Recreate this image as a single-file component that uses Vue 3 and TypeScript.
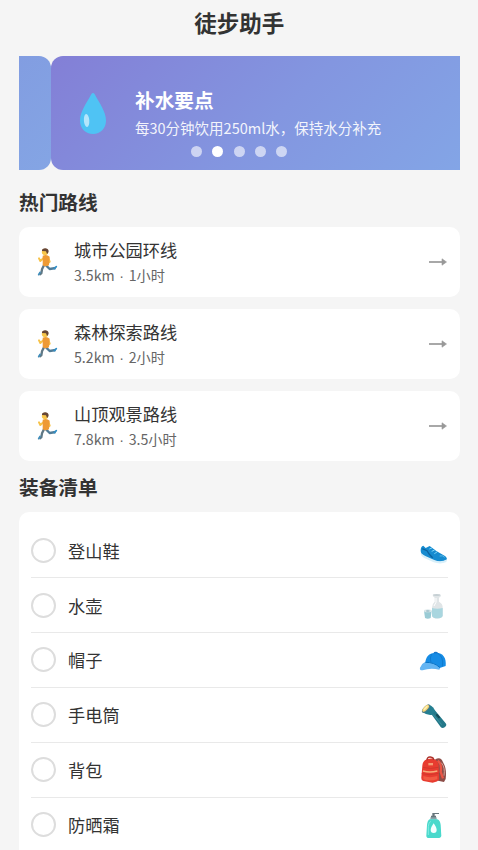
<script setup lang="ts">
import { reactive, ref } from 'vue'

interface Route {
  name: string
  distance: string
  duration: string
}
interface Gear {
  name: string
  icon: string
  checked: boolean
}

const routes: Route[] = [
  { name: '城市公园环线', distance: '3.5km', duration: '1小时' },
  { name: '森林探索路线', distance: '5.2km', duration: '2小时' },
  { name: '山顶观景路线', distance: '7.8km', duration: '3.5小时' },
]

const gear = reactive<Gear[]>([
  { name: '登山鞋', icon: 'shoe', checked: false },
  { name: '水壶', icon: 'bottle', checked: false },
  { name: '帽子', icon: 'cap', checked: false },
  { name: '手电筒', icon: 'torch', checked: false },
  { name: '背包', icon: 'pack', checked: false },
  { name: '防晒霜', icon: 'lotion', checked: false },
])

const activeSlide = ref(1)
</script>

<template>
  <main class="page">
    <h1 class="title">徒步助手</h1>

    <section class="banner">
      <div class="slide previous"></div>
      <div class="slide current">
        <svg class="drop" viewBox="0 0 28 44">
          <path d="M14 1C15 1 15.7 2.2 16.4 3.6 20 10.500 27 19.500 27 28.500 27 36.500 21.500 42 14 42S1 36.500 1 28.500C1 19.500 8 10.500 11.600 3.600 12.300 2.200 13 1 14 1Z" fill="#4fc3f4" />
          <ellipse cx="7.600" cy="28.500" rx="2.700" ry="6.600" fill="#b5e6fb" transform="rotate(-4 7.6 28.5)" />
        </svg>
        <div class="tip">
          <h2 class="tip-title">补水要点</h2>
          <p class="tip-text">每30分钟饮用250ml水，保持水分补充</p>
        </div>
      </div>
      <div class="dots">
        <span v-for="n in 5" :key="n" class="dot" :class="{ on: n - 1 === activeSlide }" @click="activeSlide = n - 1"></span>
      </div>
    </section>

    <h2 class="heading">热门路线</h2>
    <ul class="routes">
      <li v-for="route in routes" :key="route.name" class="route">
        <svg class="runner" viewBox="18 21 90 90">
          <path d="M57 76 51 88 49 100 43 104" fill="none" stroke="#607885" stroke-width="7" stroke-linejoin="round" />
          <path d="M63 76 74 87 92 84" fill="none" stroke="#507c98" stroke-width="7" stroke-linejoin="round" />
          <path d="M41 104 45 97" stroke="#3f8dbb" stroke-width="5" stroke-linecap="round" />
          <path d="M88 86 94 80" stroke="#318fc7" stroke-width="5" stroke-linecap="round" />
          <path d="M56 54 46 63 42 55M70 54 74 65 67 70" fill="none" stroke="#f7c34a" stroke-width="6" stroke-linecap="round" stroke-linejoin="round" />
          <path d="M53 47Q65 42 74 50L72 76Q61 82 53 76Z" fill="#ee9a35" />
          <circle cx="60" cy="36" r="9.500" fill="#f8c64b" />
          <path d="M51 33C49 23 71 21 71 34Q70 40 66 42L63 34Z" fill="#654536" />
        </svg>
        <div class="info">
          <h3 class="name">{{ route.name }}</h3>
          <p class="meta">{{ route.distance }}<span class="separator">·</span>{{ route.duration }}</p>
        </div>
        <svg class="arrow" viewBox="0 0 18 8">
          <path d="M0 4H15" stroke="#999" stroke-width="1.700" />
          <path d="M13 .8 17.500 4 13 7.200Z" fill="#999" stroke="#999" stroke-width=".6" />
        </svg>
      </li>
    </ul>

    <h2 class="heading gear-heading">装备清单</h2>
    <ul class="gear">
      <li v-for="item in gear" :key="item.name" class="item" @click="item.checked = !item.checked">
        <span class="check" :class="{ checked: item.checked }"></span>
        <span class="label">{{ item.name }}</span>

        <svg v-if="item.icon === 'shoe'" class="icon" viewBox="29 14 84 84">
          <path d="M31 57Q31 45 39 43L46 50 58 44 78 59 100 72Q112 78 109 86 92 95 70 88L40 73Q31 68 31 57Z" fill="#168bd0" />
          <path d="M31 66 45 74 72 86Q92 94 110 84L108 92Q91 100 70 93L42 80Q32 76 31 66Z" fill="#d8eff9" />
          <path d="M36 52 50 58 57 69 67 79" fill="none" stroke="#0b629f" stroke-width="4" />
          <path d="M57 53 65 50M64 60 73 56M72 67 80 62" stroke="#7bd2f5" stroke-width="3" />
          <path d="M88 74Q97 71 103 78" fill="none" stroke="#58b7e6" stroke-width="3" />
        </svg>
        <svg v-else-if="item.icon === 'bottle'" class="icon" viewBox="29 16 84 84">
          <path d="M67 27H91Q94 32 86 36V48Q98 54 97 66V91Q96 98 81 99 66 98 65 90V66Q65 54 73 48V36Q66 32 67 27Z" fill="#e0e5e7" />
          <path d="M65 67Q81 71 97 67V91Q94 98 81 98T65 91Z" fill="#a9d6df" />
          <path d="M77 37V50L71 61" fill="none" stroke="#fff" stroke-width="3" />
          <ellipse cx="79" cy="28" rx="11" ry="3" fill="#c6d0d4" />
          <path d="M41 75H64L61 97Q52 101 44 97Z" fill="#9acbd5" />
          <ellipse cx="52.500" cy="75" rx="11.500" ry="4.500" fill="#dce8eb" />
          <ellipse cx="52.500" cy="76" rx="6" ry="2" fill="#95bac5" />
        </svg>
        <svg v-else-if="item.icon === 'cap'" class="icon" viewBox="29 16 84 84">
          <path d="M45 68C45 48 58 36 76 36 97 35 109 51 106 76L88 82Z" fill="#168ce5" />
          <path d="M65 40C58 50 60 62 64 69M81 37Q101 48 96 77" fill="none" stroke="#0b71c1" stroke-width="2" />
          <ellipse cx="76" cy="36" rx="6" ry="2.500" fill="#1976c9" />
          <path d="M43 65Q69 62 90 81L87 87Q60 80 37 89 27 90 29 81 32 70 43 65Z" fill="#64b5f3" />
          <path d="M45 65Q71 64 89 81" fill="none" stroke="#0873c6" stroke-width="3" />
        </svg>
        <svg v-else-if="item.icon === 'torch'" class="icon" viewBox="29 24 84 84">
          <path d="M61 61 73 51 106 91Q111 97 103 103 96 108 91 102Z" fill="#247889" />
          <path d="M36 57 57 35Q71 42 75 55L66 65Q53 69 36 57Z" fill="#247f91" />
          <ellipse cx="47" cy="47" rx="7" ry="16" transform="rotate(43 47 47)" fill="#557d83" />
          <ellipse cx="46" cy="46" rx="5.500" ry="13" transform="rotate(43 46 46)" fill="#f8d779" />
          <path d="M41 50 51 40" stroke="#fff4bb" stroke-width="4" />
          <path d="M80 66 86 73" stroke="#164954" stroke-width="6" stroke-linecap="round" />
          <path d="M68 64 94 95" stroke="#3b93a0" stroke-width="3" />
        </svg>
        <svg v-else-if="item.icon === 'pack'" class="icon" viewBox="29 24 84 84">
          <path d="M75 34Q92 25 98 43 110 62 106 93L101 102 83 98 75 82Z" fill="#8d4d48" />
          <path d="M82 38Q95 47 91 72L98 91" fill="none" stroke="#eb5545" stroke-width="7" />
          <path d="M93 44Q105 58 101 83" fill="none" stroke="#d6a298" stroke-width="3" />
          <path d="M36 53Q37 34 58 32T85 50L86 94Q83 102 67 104L39 99Q32 97 33 88Z" fill="#e83c30" />
          <path d="M50 37Q50 26 60 27T70 36" fill="none" stroke="#ad332c" stroke-width="4" />
          <path d="M38 58Q60 65 84 58M34 77Q58 84 85 76" fill="none" stroke="#c93429" stroke-width="2" />
          <path d="M38 69Q58 75 81 69" fill="none" stroke="#f7ad79" stroke-width="4" />
          <path d="M54 45H68V52H54Z" fill="#f49b73" />
          <path d="M39 84Q58 91 81 84V94Q58 101 39 94Z" fill="#f25b43" />
        </svg>
        <svg v-else class="icon" viewBox="29 24 84 84">
          <path d="M62 45H77V38H73V33H86V30H66V38H62Z" fill="#66767c" />
          <path d="M60 43H79V50H60Z" fill="#8ba3a8" />
          <path d="M58 49H81Q90 53 91 66L93 98Q92 105 83 105H56Q48 105 48 98L50 66Q51 53 58 49Z" fill="#4ad9cc" />
          <path d="M54 96V70Q55 59 61 55" fill="none" stroke="#83ebe1" stroke-width="3" />
          <path d="M70 61Q61 74 61 81A9 9 0 0 0 79 81Q79 74 70 61Z" fill="#f4ffff" />
        </svg>
      </li>
    </ul>
  </main>
</template>

<style>
body {
  background: #f5f5f5;
  overflow: hidden;
}
</style>

<style scoped>
.page {
  box-sizing: border-box;
  height: 850px;
  overflow: hidden;
  padding: 0 18.500px 0 19px;
  background: #f5f5f5;
  color: #333;
  font-family: "Noto Sans CJK SC", sans-serif;
}
h1, h2, h3, p, ul {
  margin: 0;
  padding: 0;
}
ul {
  list-style: none;
}
.title {
  height: 56px;
  padding-top: 6px;
  box-sizing: border-box;
  font-size: 22.500px;
  line-height: 32px;
  text-align: center;
}
.banner {
  position: relative;
  display: flex;
  height: 114px;
  overflow: hidden;
}
.slide {
  box-sizing: border-box;
  border-radius: 12px;
}
.previous {
  flex: 0 0 32px;
  border-radius: 0 12px 12px 0;
  background: linear-gradient(135deg, #829de1, #84a5e4);
}
.current {
  flex: 1;
  display: flex;
  align-items: center;
  padding: 0 0 0 28px;
  border-radius: 12px 0 0 12px;
  background: linear-gradient(135deg, #837fd6, #8396e0 55%, #83a5e6);
}
.drop {
  width: 28px;
  height: 44px;
  margin: 2px 28px 0 0;
}
.tip {
  color: #fff;
}
.tip-title {
  font-size: 19.700px;
  line-height: 28px;
}
.tip-text {
  margin-top: 2px;
  font-size: 14.500px;
  line-height: 24px;
  white-space: nowrap;
  opacity: .9;
}
.dots {
  position: absolute;
  left: 172px;
  bottom: 13px;
  display: flex;
  gap: 10.300px;
}
.dot {
  width: 11px;
  height: 11px;
  border-radius: 50%;
  background: rgba(255, 255, 255, .6);
}
.dot.on {
  background: #fff;
}
.heading {
  height: 57px;
  padding-top: 17px;
  box-sizing: border-box;
  font-size: 19.700px;
  line-height: 30px;
}
.routes {
  display: grid;
  gap: 12.200px;
}
.route {
  display: flex;
  align-items: center;
  height: 70px;
  box-sizing: border-box;
  padding: 0 13px 0 12px;
  border-radius: 10px;
  background: #fff;
}
.runner {
  width: 30px;
  height: 30px;
  margin-right: 13px;
}
.info {
  flex: 1;
}
.name {
  font-size: 17.200px;
  font-weight: 400;
  line-height: 26px;
}
.meta {
  color: #666;
  font-size: 14.200px;
  line-height: 24px;
}
.separator {
  display: inline-block;
  width: 14px;
  font-family: "Liberation Sans", sans-serif;
  line-height: 1;
  text-align: center;
}
.arrow {
  width: 18px;
  height: 8px;
}
.gear-heading {
  height: 51px;
  padding-top: 11px;
}
.gear {
  padding: 11px 12px 24px;
  border-radius: 10px;
  background: #fff;
}
.item {
  display: flex;
  align-items: center;
  height: 54.850px;
  box-sizing: border-box;
  border-bottom: 1px solid #e9e9e9;
}
.check {
  width: 25px;
  height: 25px;
  box-sizing: border-box;
  margin-right: 12px;
  border: 2px solid #ddd;
  border-radius: 50%;
}
.check.checked {
  background: #829de1;
}
.label {
  flex: 1;
  padding-top: 1px;
  font-size: 17.200px;
  line-height: 26px;
}
.icon {
  width: 28px;
  height: 28px;
  overflow: visible;
}
</style>
